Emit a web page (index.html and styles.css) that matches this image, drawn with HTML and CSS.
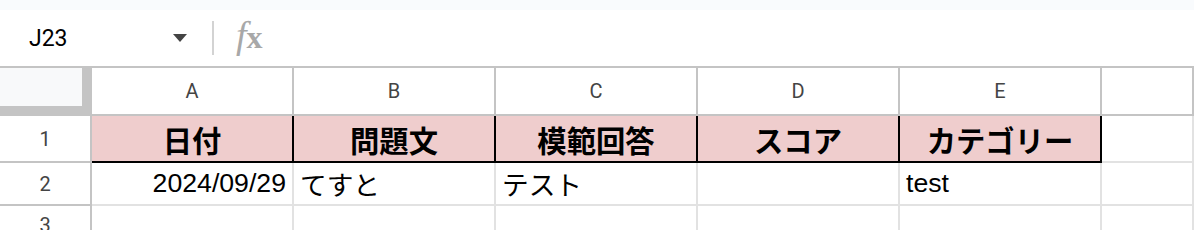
FILE: index.html
```html
<!DOCTYPE html>
<html lang="ja">
<head>
<meta charset="utf-8">
<title>Sheet</title>
<link rel="stylesheet" href="styles.css">
</head>
<body>
<div class="top-strip"></div>
<div class="formula-bar">
  <div class="name-box">
    <span class="name-text">J23</span>
    <span class="caret"></span>
  </div>
  <span class="sep"></span>
  <span class="fx"><span class="fx-f">f</span><span class="fx-x">x</span></span>
</div>
<div class="grid">
  <div class="corner"><div class="corner-fill"></div></div>
  <div class="col-head">A</div>
  <div class="col-head">B</div>
  <div class="col-head">C</div>
  <div class="col-head">D</div>
  <div class="col-head">E</div>
  <div class="col-head"></div>

  <div class="row-head">1</div>
  <div class="cell title">日付</div>
  <div class="cell title">問題文</div>
  <div class="cell title">模範回答</div>
  <div class="cell title">スコア</div>
  <div class="cell title">カテゴリー</div>
  <div class="cell"></div>

  <div class="row-head">2</div>
  <div class="cell num">2024/09/29</div>
  <div class="cell">てすと</div>
  <div class="cell">テスト</div>
  <div class="cell"></div>
  <div class="cell">test</div>
  <div class="cell"></div>

  <div class="row-head r3">3</div>
  <div class="cell"></div>
  <div class="cell"></div>
  <div class="cell"></div>
  <div class="cell"></div>
  <div class="cell"></div>
  <div class="cell"></div>
</div>
</body>
</html>
```

FILE: styles.css
```css
* { box-sizing: border-box; }
html, body {
  margin: 0;
  padding: 0;
  background: #ffffff;
  overflow: hidden;
}
body {
  width: 1194px;
  height: 230px;
  font-family: "Liberation Sans", Arial, "Noto Sans CJK JP", sans-serif;
}
.top-strip {
  height: 10px;
  background: #f9fbfd;
}
.formula-bar {
  height: 56px;
  display: flex;
  align-items: center;
  background: #ffffff;
}
.name-box {
  width: 212px;
  display: flex;
  align-items: center;
  padding-left: 29px;
  padding-right: 25px;
}
.name-text {
  font-family: Roboto, "Liberation Sans", sans-serif;
  font-size: 23px;
  color: #000000;
  flex: 1;
}
.caret {
  width: 0;
  height: 0;
  border-left: 7px solid transparent;
  border-right: 7px solid transparent;
  border-top: 8px solid #444444;
}
.sep {
  width: 2px;
  height: 34px;
  background: #d3d3d3;
}
.fx {
  margin-left: 22px;
  font-family: "Liberation Serif", "DejaVu Serif", serif;
  font-style: italic;
  color: #a8a8a8;
  font-size: 38px;
  line-height: 1;
  display: flex;
  align-items: baseline;
  margin-top: -6px;
}
.fx-f { font-weight: 400; }
.fx-x { font-weight: 700; font-style: normal; margin-left: 0; font-size: 32px; }

.grid {
  display: grid;
  grid-template-columns: 92px repeat(5, 202px) 92px;
  grid-template-rows: 48px 47px 43px 43px;
  border-top: 2px solid #c4c4c4;
}
.corner {
  background: #c4c4c4;
  display: flex;
  align-items: flex-start;
}
.corner-fill {
  width: 82px;
  height: 38px;
  background: #f8f9fa;
}
.col-head {
  border-right: 2px solid #c4c4c4;
  border-bottom: 2px solid #c4c4c4;
  display: flex;
  align-items: center;
  justify-content: center;
  font-family: Roboto, "Liberation Sans", sans-serif;
  font-size: 20px;
  color: #444444;
}
.row-head {
  border-right: 2px solid #c4c4c4;
  border-bottom: 2px solid #c4c4c4;
  display: flex;
  align-items: center;
  justify-content: center;
  font-family: Roboto, "Liberation Sans", sans-serif;
  font-size: 20px;
  color: #444444;
}
.row-head.r3 { align-items: flex-start; padding-top: 7px; }
.cell {
  border-right: 2px solid #e2e2e2;
  border-bottom: 2px solid #e2e2e2;
  display: flex;
  align-items: center;
  padding: 0 6px;
  font-size: 26.67px;
  color: #000000;
  white-space: nowrap;
  overflow: hidden;
  font-family: "Liberation Sans", Arial, "Noto Sans CJK JP", sans-serif;
}
.cell.num { justify-content: flex-end; }
.cell.title {
  background: #efcdcd;
  border-right: 2px solid #000000;
  border-bottom: 2px solid #000000;
  justify-content: center;
  font-family: "Noto Sans CJK JP", sans-serif;
  font-weight: 700;
  font-size: 29.33px;
}
```
